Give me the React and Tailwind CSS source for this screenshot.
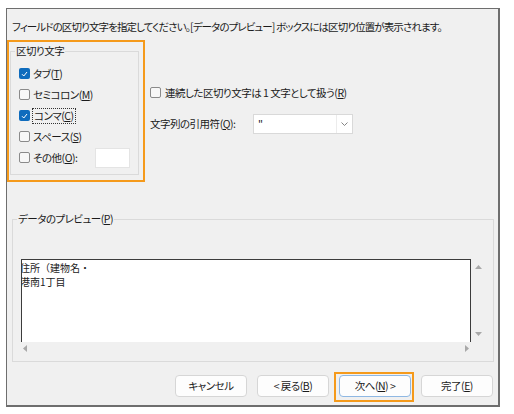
import React from 'react'

const font = "font-['Noto_Sans_CJK_JP','Noto_Sans',sans-serif] [font-feature-settings:'palt']"

function Check({ checked }) {
    if (checked) {
        return (
            <span className="w-[11px] h-[11px] rounded-[2px] bg-[#0f6cbd] flex items-center justify-center shrink-0">
                <svg width="7" height="6" viewBox="0 0 7 6">
                    <path d="M1 3.2 L2.8 5 L6 1" fill="none" stroke="#fff" strokeWidth="1" />
                </svg>
            </span>
        )
    }
    return <span className="w-[11px] h-[11px] rounded-[2px] border border-[#8a8a8a] bg-[#f7f7f7] shrink-0" />
}

function Key({ k }) {
    return (
        <>
            (<span className="underline underline-offset-[1px]">{k}</span>)
        </>
    )
}

function Row({ checked, label, k, focused, children }) {
    return (
        <div className="h-[21px] flex items-center">
            <Check checked={checked} />
            <span className={focused ? 'ml-[2px] px-[1px] border border-dotted border-[#333] leading-[14px]' : 'ml-[3px]'}>
                {label}
                <Key k={k} />
                {children}
            </span>
        </div>
    )
}

function Arrow({ dir }) {
    const pts = {
        up: '0,4 3.5,0 7,4',
        down: '0,0 3.5,4 7,0',
        left: '4,0 0,3.5 4,7',
        right: '0,0 4,3.5 0,7',
    }[dir]
    const vertical = dir === 'up' || dir === 'down'
    return (
        <svg width={vertical ? 7 : 4} height={vertical ? 4 : 7}>
            <polygon points={pts} fill="#a8a8a8" />
        </svg>
    )
}

function Button({ children, focused }) {
    return (
        <div className="relative">
            <button
                className={`w-[72px] h-[22px] rounded-[4px] bg-[#fdfdfd] text-[10.5px] text-[#1b1b1b] flex items-center justify-center border ${
                    focused ? 'border-[#8fb8e3]' : 'border-[#d6d6d6]'
                }`}
            >
                {children}
            </button>
            {focused && (
                <span className="absolute left-[-5px] top-[-3px] right-[-3px] bottom-[-5px] border-2 border-[#f59a1b] pointer-events-none" />
            )}
        </div>
    )
}

export default function App() {
    return (
        <div className={`min-h-screen bg-white pt-2 pl-[6px] text-[10.5px] tracking-[-0.5px] text-[#1b1b1b] ${font}`}>
            <div className="w-[494px] h-[399px] border-l border-t border-r-2 border-b-2 border-[#6e6e6e] bg-[#f0f0f0] flex flex-col">
                <p className="mt-[11px] ml-[5px] leading-[14px] tracking-[-0.9px] whitespace-nowrap">
                    フィールドの区切り文字を指定してください。[データのプレビュー] ボックスには区切り位置が表示されます。
                </p>

                <div className="flex mt-[6px]">
                    {/* delimiter options */}
                    <div className="w-[138px] h-[142px] border-2 border-[#f59a1b]">
                        <fieldset className="mt-[2px] ml-[1px] w-[129px] h-[131px] border border-[#dadada]">
                            <legend className="ml-[4px] px-[1px] leading-[14px]">区切り文字</legend>
                            <div className="pt-[5px] pl-[8px] flex flex-col">
                                <Row checked label="タブ" k="T" />
                                <Row label="セミコロン" k="M" />
                                <Row checked label="コンマ" k="C" focused />
                                <Row label="スペース" k="S" />
                                <div className="h-[21px] flex items-center">
                                    <Check />
                                    <span className="ml-[3px] w-[62px]">
                                        その他<Key k="O" />:
                                    </span>
                                    <span className="w-[35px] h-[20px] bg-white border border-[#e4e4e4]" />
                                </div>
                            </div>
                        </fieldset>
                    </div>

                    <div className="ml-[5px] flex flex-col">
                        <div className="mt-[42px] h-[21px] flex items-center">
                            <Check />
                            <span className="ml-[4px]">
                                連続した区切り文字は 1 文字として扱う<Key k="R" />
                            </span>
                        </div>
                        <div className="mt-[11px] flex items-center">
                            <span className="w-[103px]">
                                文字列の引用符<Key k="Q" />:
                            </span>
                            <div className="w-[100px] h-[20px] bg-white border border-[#d9d9d9] flex items-center">
                                <span className="flex-1 pl-[4px]">"</span>
                                <span className="w-px h-[18px] bg-[#ececec]" />
                                <span className="w-[15px] flex items-center justify-center">
                                    <svg width="7" height="4" viewBox="0 0 7 4">
                                        <path d="M0.5 0.5 L3.5 3.5 L6.5 0.5" fill="none" stroke="#777" strokeWidth="0.9" />
                                    </svg>
                                </span>
                            </div>
                        </div>
                    </div>
                </div>

                {/* data preview */}
                <fieldset className="mt-[30px] ml-[5px] w-[482px] border border-[#dadada] pb-[6px]">
                    <legend className="ml-[4px] px-[1px] leading-[14px]">
                        データのプレビュー<Key k="P" />
                    </legend>
                    <div className="mt-[33px] ml-[8px] w-[464px] h-[96px] flex flex-col">
                        <div className="flex h-[83px]">
                            <div className="w-[450px] bg-white border-l border-t border-r border-[#3c3c3c] overflow-hidden">
                                <div className="-ml-[2px] pt-[1px] text-[10px] leading-[14px] tracking-normal [font-feature-settings:normal] text-[#222]">
                                    <div>住所（建物名・</div>
                                    <div>港南1丁目</div>
                                </div>
                            </div>
                            <div className="flex-1 flex flex-col items-center justify-between py-[6px]">
                                <Arrow dir="up" />
                                <Arrow dir="down" />
                            </div>
                        </div>
                        <div className="flex-1 w-[450px] flex items-center justify-between px-[2px]">
                            <Arrow dir="left" />
                            <Arrow dir="right" />
                        </div>
                    </div>
                </fieldset>

                <div className="mt-[13px] pr-[5px] flex justify-end gap-[10px]">
                    <Button>キャンセル</Button>
                    <Button>
                        &lt; 戻る<Key k="B" />
                    </Button>
                    <Button focused>
                        次へ<Key k="N" /> &gt;
                    </Button>
                    <Button>
                        完了<Key k="E" />
                    </Button>
                </div>
            </div>
        </div>
    )
}
